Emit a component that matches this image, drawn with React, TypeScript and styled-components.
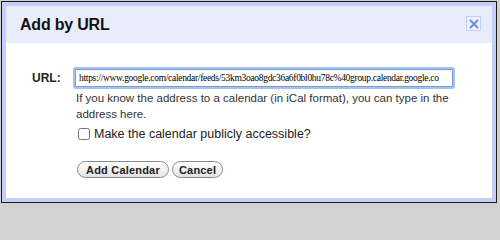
import React from 'react'
import styled, { createGlobalStyle } from 'styled-components'

const GlobalStyle = createGlobalStyle`
  html, body {
    margin: 0;
    padding: 0;
    background: #d2d2d2;
    font-family: "Liberation Sans", Arial, sans-serif;
  }
`

const Page = styled.div`
  padding: 1px 0 0 1px;
  width: 500px;
  height: 207px;
  box-sizing: border-box;
`

const Dialog = styled.div`
  width: 496px;
  height: 202px;
  box-sizing: border-box;
  border: 1px solid #1a1a1a;
  background: #c4d0fa;
  padding: 4px;
  display: flex;
  flex-direction: column;
`

const Header = styled.div`
  height: 37px;
  background: #e8edfc;
  display: flex;
  align-items: center;
  justify-content: space-between;
  padding: 0 11px 0 14px;
`

const Title = styled.h1`
  margin: 0;
  font-size: 16px;
  letter-spacing: -0.2px;
  font-weight: bold;
  color: #111;
`

const CloseButton = styled.button`
  width: 15px;
  height: 15px;
  margin-top: -2px;
  padding: 0;
  border: 1px solid #c3cff6;
  background: #eef2fe;
  display: flex;
  align-items: center;
  justify-content: center;
  cursor: pointer;
`

const Body = styled.div`
  flex: 1;
  background: #fff;
  padding: 26px 0 0 26px;
  display: flex;
  flex-direction: column;
`

const UrlRow = styled.div`
  display: flex;
  align-items: center;
`

const Label = styled.label`
  font-size: 12px;
  font-weight: bold;
  color: #222;
  width: 43px;
`

const Input = styled.input`
  width: 378px;
  height: 18px;
  box-sizing: border-box;
  border: 1px solid #7b9ad8;
  box-shadow: 0 0 0 2px #a5c3f0;
  border-radius: 1px;
  padding: 0 3px;
  font-family: "Liberation Serif", "Times New Roman", serif;
  font-size: 9.5px;
  letter-spacing: -0.3px;
  color: #000;
  outline: none;
`

const Indented = styled.div`
  padding-left: 44px;
  display: flex;
  flex-direction: column;
`

const Help = styled.p`
  margin: 3px 0 0 0;
  font-size: 11.5px;
  line-height: 16px;
  color: #333;
  width: 385px;
`

const CheckRow = styled.label`
  display: flex;
  align-items: center;
  height: 16px;
  margin-top: 4px;
  font-size: 12.5px;
  color: #222;
`

const Check = styled.input`
  width: 12px;
  height: 12px;
  margin: 0 4px 0 2px;
`

const Buttons = styled.div`
  display: flex;
  gap: 3px;
  margin-top: 19px;
  padding-left: 1px;
`

const Button = styled.button<{ $wide?: boolean }>`
  height: 17px;
  padding: 0 ${p => (p.$wide ? 8 : 6)}px;
  border: 1px solid #8a8a8a;
  border-radius: 9px;
  background: linear-gradient(#ffffff, #f3f3f3 50%, #e2e2e2);
  font-family: "Liberation Sans", Arial, sans-serif;
  font-size: 11px;
  font-weight: bold;
  color: #222;
  letter-spacing: 0.2px;
  cursor: pointer;
`

const App = () => {
  return (
    <>
      <GlobalStyle />
      <Page>
        <Dialog>
          <Header>
            <Title>Add by URL</Title>
            <CloseButton aria-label="Close">
              <svg width="12" height="12" viewBox="0 0 12 12">
                <path d="M2 2 L10 10 M10 2 L2 10" stroke="#6a88e4" strokeWidth="1.8" />
              </svg>
            </CloseButton>
          </Header>
          <Body>
            <UrlRow>
              <Label>URL:</Label>
              <Input
                readOnly
                value="https://www.google.com/calendar/feeds/53km3oao8gdc36a6f0bl0hu78c%40group.calendar.google.co"
              />
            </UrlRow>
            <Indented>
              <Help>
                If you know the address to a calendar (in iCal format), you can type in the address here.
              </Help>
              <CheckRow>
                <Check type="checkbox" />
                Make the calendar publicly accessible?
              </CheckRow>
              <Buttons>
                <Button $wide>Add Calendar</Button>
                <Button>Cancel</Button>
              </Buttons>
            </Indented>
          </Body>
        </Dialog>
      </Page>
    </>
  )
}

export default App
